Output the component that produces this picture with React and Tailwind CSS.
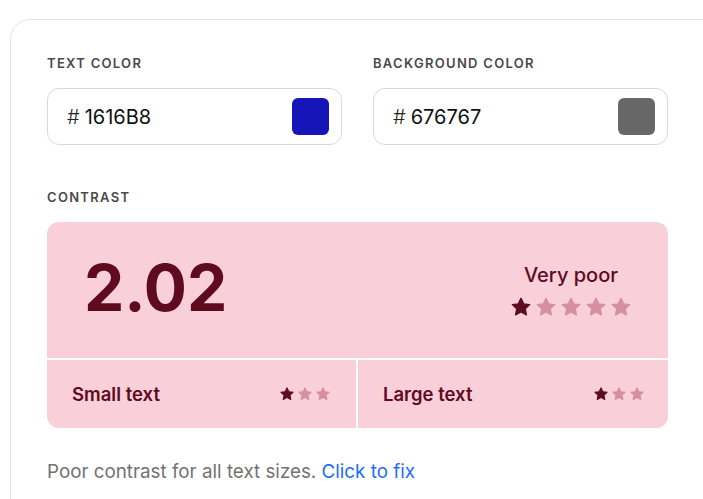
import React from 'react';

const STAR = 'M12 2.5l2.9 6.1 6.6.8-4.9 4.6 1.3 6.6L12 17.3l-5.9 3.3 1.3-6.6-4.9-4.6 6.6-.8z';

const Star = ({ filled, size }) => (
  <svg width={size} height={size} viewBox="0 0 24 24" className={filled ? 'text-[#5e0a1f]' : 'text-[#d4909f]'}>
    <path d={STAR} fill="currentColor" stroke="currentColor" strokeWidth="1.5" strokeLinejoin="round" />
  </svg>
);

const Stars = ({ count, total, size, gap }) => (
  <div className={`flex ${gap}`}>
    {Array.from({ length: total }).map((_, i) => (
      <Star key={i} filled={i < count} size={size} />
    ))}
  </div>
);

const ColorField = ({ label, value, swatch }) => (
  <div className="flex flex-col">
    <div className="text-[13px] font-semibold tracking-[0.1em] text-[#4a4a4a] leading-none h-[13px]">{label}</div>
    <div className="mt-[18px] h-[57px] rounded-xl border border-[#d9d9d9] flex items-center pl-[19px] pr-[12px]">
      <span className="text-[20px] text-[#222] mr-[5px] font-light">#</span>
      <span className="text-[20px] text-[#111]">{value}</span>
      <div className={`ml-auto w-[37px] h-[37px] rounded-md ${swatch}`} />
    </div>
  </div>
);

export default function App() {
  return (
    <div className="w-[703px] h-[499px] overflow-hidden bg-white font-['Inter',sans-serif] pt-[19px] pl-[10px]">
      <div className="w-[720px] h-[520px] border border-[#e4e4e4] rounded-tl-[20px] pt-[37px] pl-[36px]">
        <div className="w-[621px] grid grid-cols-2 gap-x-[31px]">
          <ColorField label="TEXT COLOR" value="1616B8" swatch="bg-[#1616b8]" />
          <ColorField label="BACKGROUND COLOR" value="676767" swatch="bg-[#676767]" />
        </div>

        <div className="mt-[46px] text-[13px] font-semibold tracking-[0.1em] text-[#4a4a4a] leading-none h-[13px]">CONTRAST</div>

        <div className="mt-[18px] w-[621px] rounded-xl overflow-hidden bg-white grid grid-cols-[309px_1fr] gap-[2px] text-[#5e0a1f]">
          <div className="col-span-2 h-[136px] bg-[#f9cfd9] flex items-center pl-[37px] pr-[36px]">
            <div className="text-[64px] font-bold leading-none -mt-[4px]">2.02</div>
            <div className="ml-auto flex flex-col items-center mt-[2px]">
              <div className="text-[20px] font-medium leading-none">Very poor</div>
              <div className="mt-[11px]">
                <Stars count={1} total={5} size={22} gap="gap-[3px]" />
              </div>
            </div>
          </div>
          <div className="h-[68px] bg-[#f9cfd9] flex items-center pl-[25px] pr-[25px]">
            <span className="text-[18.5px] font-semibold mt-[2px]">Small text</span>
            <div className="ml-auto">
              <Stars count={1} total={3} size={16} gap="gap-[2px]" />
            </div>
          </div>
          <div className="h-[68px] bg-[#f9cfd9] flex items-center pl-[25px] pr-[23px]">
            <span className="text-[18.5px] font-semibold mt-[2px]">Large text</span>
            <div className="ml-auto">
              <Stars count={1} total={3} size={16} gap="gap-[2px]" />
            </div>
          </div>
        </div>

        <div className="mt-[30px] text-[18.8px] text-[#727272]">
          Poor contrast for all text sizes. <span className="text-[#1a6cff]">Click to fix</span>
        </div>
      </div>
    </div>
  );
}
